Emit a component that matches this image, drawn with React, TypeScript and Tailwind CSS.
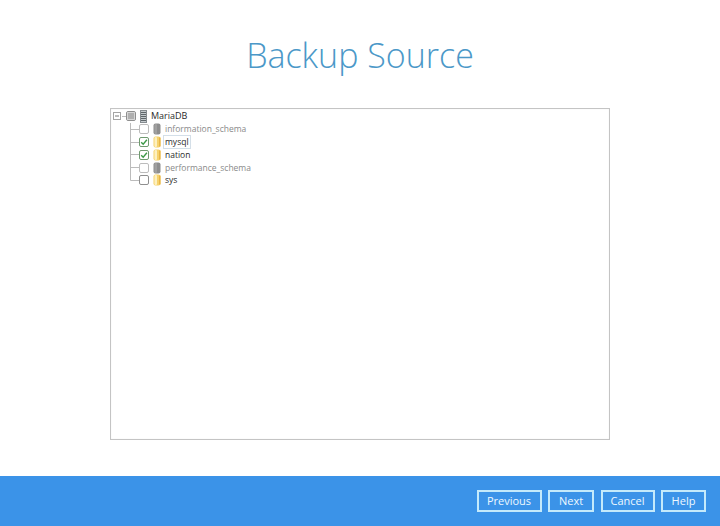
import React from 'react';

const font = { title: 'font-["Open_Sans",sans-serif]' };

function Checkbox({ checked, dim }: { checked?: boolean; dim?: boolean }) {
    return (
        <svg width="10" height="10" viewBox="0 0 10 10" className="shrink-0">
            <rect x="0.5" y="0.5" width="9" height="9" rx="1.5" fill="#fff" stroke={checked ? '#6f9a6f' : dim ? '#bcbcbc' : '#8f8f8f'} />
            {checked && <path d="M2.2 5.2 L4.2 7.2 L7.9 2.8" fill="none" stroke="#3c9a46" strokeWidth="1.4" />}
        </svg>
    );
}

function DbIcon({ active }: { active?: boolean }) {
    return (
        <svg width="8" height="12" viewBox="0 0 8 12" className="shrink-0">
            <rect x="0.5" y="0.5" width="7" height="11" rx="2" fill={active ? '#f6d26c' : '#8e8e8e'} />
            <rect x="1.5" y="1" width="2.5" height="10" rx="1" fill={active ? '#fdf0c0' : '#a0a0a0'} />
            {active && <rect x="6" y="1.5" width="1.5" height="9" fill="#e8b445" />}
        </svg>
    );
}

function Connector({ last }: { last?: boolean }) {
    return (
        <svg width="9" height="13" viewBox="0 0 9 13" className="shrink-0">
            <path d={last ? 'M0.5 0 V6.5 H9' : 'M0.5 0 V13 M0.5 6.5 H9'} fill="none" stroke="#bcbcbc" />
        </svg>
    );
}

function TreeRow({ label, checked, enabled, focused, last }: { label: string; checked?: boolean; enabled?: boolean; focused?: boolean; last?: boolean }) {
    return (
        <div className="flex h-[12.8px] items-center">
            <Connector last={last} />
            <Checkbox checked={checked} dim={!enabled} />
            <span className="ml-[4px] flex"><DbIcon active={enabled} /></span>
            <span className={`ml-[2px] border px-[1px] text-[8.5px] leading-[12px] whitespace-nowrap ${focused ? 'border-[#d4dfe8]' : 'border-transparent'} ${enabled ? 'text-[#2a2a2a]' : 'text-[#8a8a8a]'}`}>
                {label}
            </span>
        </div>
    );
}

function FooterButton({ label, width }: { label: string; width: string }) {
    return (
        <button className={`h-[22px] ${width} border-2 border-[#c4eafb] text-[11px] font-medium text-[#eef9ff]`}>
            {label}
        </button>
    );
}

export default function App() {
    return (
        <div className={`flex h-[526px] w-[720px] flex-col bg-white ${font.title}`}>
            <h1 className="pt-[31px] text-center text-[34px] leading-[48px] font-light text-[#4b98c8]">Backup Source</h1>

            <div className="mt-[29px] ml-[110px] h-[332px] w-[500px] border border-[#c4c4c4] pt-[1px] pl-[2px] shadow-[inset_0_0_1px_#ddd]">
                {/* Root node */}
                <div className="flex h-[12.8px] items-center">
                    <svg width="9" height="9" viewBox="0 0 9 9" className="shrink-0">
                        <rect x="0.5" y="0.5" width="7" height="7" fill="#fff" stroke="#a4a4a4" />
                        <path d="M2 4 H6" stroke="#777" />
                    </svg>
                    <span className="h-px w-[4px] bg-[#bcbcbc]" />
                    <svg width="10" height="10" viewBox="0 0 10 10" className="shrink-0">
                        <rect x="0.5" y="0.5" width="9" height="9" rx="1.5" fill="#fff" stroke="#8f8f8f" />
                        <rect x="1.5" y="1.5" width="7" height="7" fill="#b0b0b0" />
                    </svg>
                    <svg width="7" height="13" viewBox="0 0 7 13" className="ml-[4px] shrink-0">
                        <rect x="0.5" y="0.5" width="6" height="12" fill="#c4cacd" stroke="#858b8f" />
                        <path d="M1 2.5 H6 M1 4.5 H6 M1 6.5 H6 M1 8.5 H6 M1 10.5 H6" stroke="#5f666a" />
                    </svg>
                    <span className="ml-[4px] text-[9px] leading-[12px] text-[#2a2a2a]">MariaDB</span>
                </div>

                {/* Databases */}
                <div className="ml-[17px]">
                    <TreeRow label="information_schema" />
                    <TreeRow label="mysql" checked enabled focused />
                    <TreeRow label="nation" checked enabled />
                    <TreeRow label="performance_schema" />
                    <TreeRow label="sys" enabled last />
                </div>
            </div>

            <div className="mt-auto flex h-[50px] items-center justify-end gap-[6.5px] bg-[#3b93e8] pr-[14px]">
                <FooterButton label="Previous" width="w-[65px]" />
                <FooterButton label="Next" width="w-[46px]" />
                <FooterButton label="Cancel" width="w-[54px]" />
                <FooterButton label="Help" width="w-[45px]" />
            </div>
        </div>
    );
}
